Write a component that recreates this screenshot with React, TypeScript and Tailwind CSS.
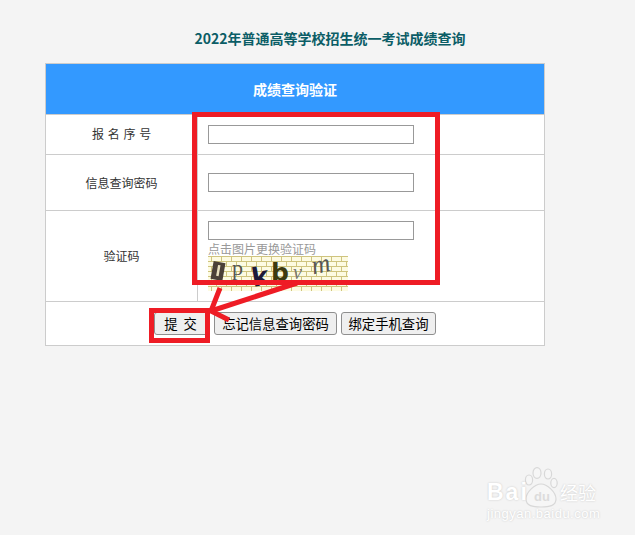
import React from 'react';

const cjk = { fontFamily: '"Noto Sans CJK SC", "Noto Sans", sans-serif' };
const arial = { fontFamily: '"Liberation Sans", sans-serif' };

const Row: React.FC<{ label: React.ReactNode; className: string; children: React.ReactNode }> = ({ label, className, children }) => (
  <div className={`flex border-b border-[#ccc] ${className}`}>
    <div className="w-[151px] shrink-0 flex items-center justify-center text-[12px] text-[#333]">{label}</div>
    <div className="flex-1 border-l border-[#ccc] pl-[10px]">{children}</div>
  </div>
);

const Field: React.FC = () => (
  <input type="text" className="block w-[206px] h-[19px] border border-[#999] bg-white" />
);

const Captcha: React.FC = () => (
  <svg width="140" height="35" viewBox="0 0 140 35" className="block overflow-visible">
    <defs>
      <pattern id="bricks" width="10" height="10" patternUnits="userSpaceOnUse">
        <rect width="10" height="10" fill="#fdfbe2" />
        <path d="M0 .5H10M0 5.5H10M3.5 0V5M8.5 5V10" stroke="#cfc47e" strokeWidth="1" fill="none" />
      </pattern>
    </defs>
    <rect width="140" height="35" fill="url(#bricks)" />
    <g transform="rotate(10 10 15)">
      <rect x="4" y="6" width="12" height="18" fill="#4b4038" />
      <rect x="9" y="9" width="2.5" height="11" fill="#e8e0c0" />
    </g>
    <text x="24" y="19" fontSize="22" fill="#555" fontFamily="Liberation Serif">p</text>
    <text x="44" y="30" fontSize="26" fontWeight="bold" fill="#1c1a38" fontFamily="DejaVu Sans" transform="rotate(-10 50 24)">k</text>
    <text x="63" y="25" fontSize="25" fontWeight="bold" fill="#3d3a10" fontFamily="DejaVu Sans">b</text>
    <text x="85" y="23" fontSize="20" fill="#777" fontStyle="italic" fontFamily="Liberation Serif">v</text>
    <text x="104" y="17" fontSize="26" fill="#555" fontStyle="italic" fontFamily="Liberation Serif" transform="rotate(-12 112 12)">m</text>
  </svg>
);

const Btn: React.FC<{ className?: string; children: React.ReactNode }> = ({ className, children }) => (
  <button className={`h-[23px] border border-[#8f8f8f] rounded-[3px] bg-[#efefef] text-[13.33px] text-black leading-none ${className ?? ''}`}>
    {children}
  </button>
);

const Watermark: React.FC = () => (
  <div className="absolute left-[486px] top-[467px] w-[115px] h-[52px] text-white select-none" style={{ textShadow: '0 0 2px #c4c4c4' }}>
    <svg width="34" height="42" viewBox="0 0 34 42" className="absolute left-[38px] top-0">
      <g fill="#f6f6f6" stroke="#d8d8d8" strokeWidth="1.2">
        <ellipse cx="5" cy="13" rx="3.6" ry="5" />
        <ellipse cx="13" cy="6" rx="4" ry="5.4" />
        <ellipse cx="24" cy="7" rx="3.6" ry="5" />
        <ellipse cx="30" cy="16" rx="3.2" ry="4.6" />
        <path d="M17 17c6 0 15 8 15 15 0 7-7 8-15 8s-15-1-15-8c0-7 9-15 15-15z" />
      </g>
    </svg>
    <span className="absolute left-[1px] top-[14px] text-[23px] leading-none font-bold tracking-[2px]" style={arial}>Bai</span>
    <span className="absolute left-[48px] top-[23px] text-[13px] leading-none font-bold text-[#dcdcdc]" style={{ ...arial, textShadow: 'none' }}>du</span>
    <span className="absolute left-[74px] top-[14px] text-[18px] leading-[22px]" style={cjk}>经验</span>
    <span className="absolute left-[1px] top-[40px] text-[13px] leading-none tracking-[0.5px]" style={arial}>jingyan.baidu.com</span>
  </div>
);

const App: React.FC = () => {
  return (
    <div className="relative h-[535px] w-[635px] overflow-hidden bg-[#f4f4f4]" style={cjk}>
      <h1 className="pt-[28px] pl-[25px] h-[63px] text-center text-[14px] leading-[21px] font-bold text-[#0b5d66]">
        2022年普通高等学校招生统一考试成绩查询
      </h1>

      <div className="ml-[45px] w-[500px] border border-[#ccc] border-b-0 bg-white">
        <div className="h-[50px] flex items-center justify-center bg-[#3399ff] border-b border-[#ccc] text-[14px] font-bold text-white box-content">
          成绩查询验证
        </div>
        <Row label={<span className="tracking-[3.7px] -mr-[4px] pb-[2px]">报名序号</span>} className="h-[40px]">
          <div className="pt-[10px]"><Field /></div>
        </Row>
        <Row label="信息查询密码" className="h-[56px]">
          <div className="pt-[18px]"><Field /></div>
        </Row>
        <Row label="验证码" className="h-[91px]">
          <div className="pt-[10px]">
            <Field />
            <p className="h-[16px] text-[12px] leading-[18px] text-[#999]">点击图片更换验证码</p>
            <Captcha />
          </div>
        </Row>
        <div className="h-[44px] flex items-start justify-center gap-[4px] pt-[10px] border-b border-[#ccc]">
          <Btn className="w-[56px] pr-[3px]">提&nbsp;&nbsp;交</Btn>
          <Btn className="w-[123px]">忘记信息查询密码</Btn>
          <Btn className="w-[95px]">绑定手机查询</Btn>
        </div>
      </div>

      {/* annotations drawn over the page */}
      <div className="absolute left-[192px] top-[112px] w-[248px] h-[173px] border-[5px] border-[#ee1c25]" />
      <div className="absolute left-[149px] top-[308px] w-[61px] h-[35px] border-[5px] border-[#ee1c25]" />
      <svg width="635" height="535" className="absolute left-0 top-0 pointer-events-none">
        <g stroke="#ee1c25" strokeWidth="5" fill="none">
          <path d="M297 283L211 311" />
          <path d="M220 288L211 311L229 320" />
        </g>
      </svg>

      <Watermark />
    </div>
  );
};

export default App;
